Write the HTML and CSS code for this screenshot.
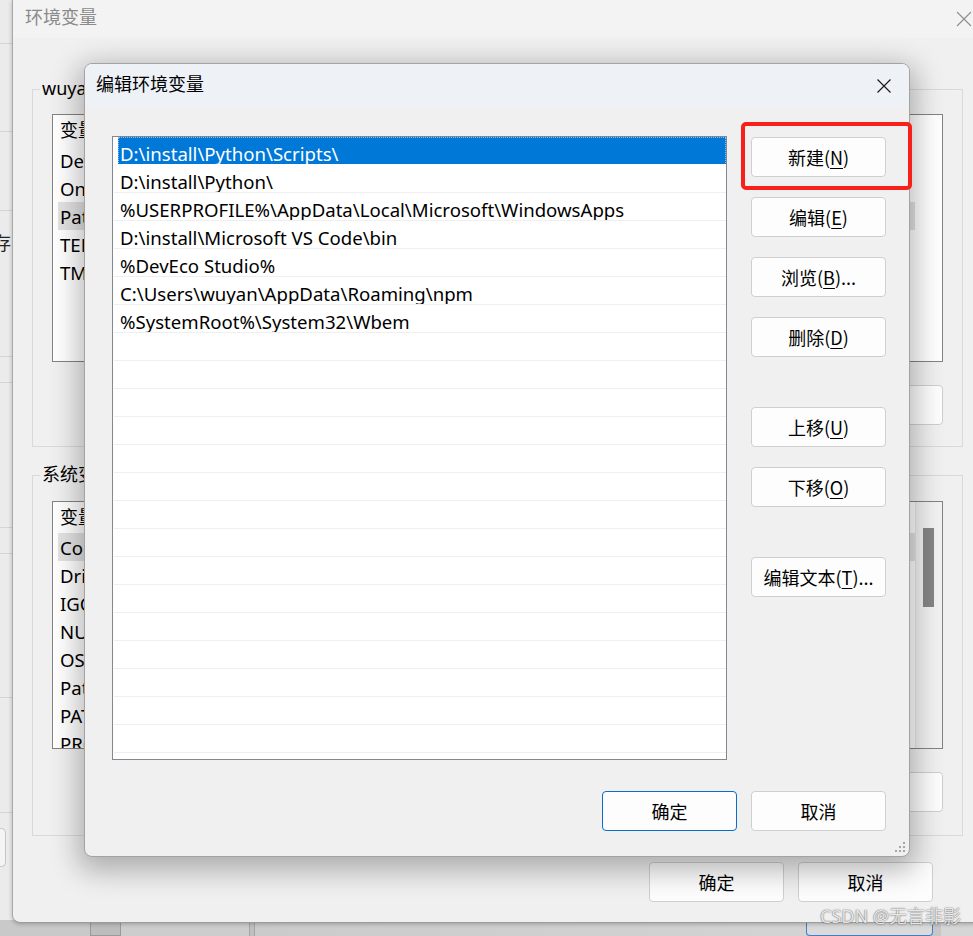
FILE: index.html
```html
<!DOCTYPE html>
<html lang="zh-CN">
<head>
<meta charset="utf-8">
<title>编辑环境变量</title>
<link rel="stylesheet" href="styles.css">
</head>
<body>
<div class="desk">
  <div class="behind-left">
    <svg class="behind-lines" width="14" height="923" viewBox="0 0 14 923">
      <g stroke="#d4d4d4" stroke-width="1">
        <line x1="0" y1="43.5" x2="14" y2="43.5"/>
        <line x1="0" y1="131.5" x2="14" y2="131.5"/>
        <line x1="0" y1="210.5" x2="14" y2="210.5"/>
        <line x1="0" y1="356.5" x2="14" y2="356.5"/>
        <line x1="0" y1="382.5" x2="14" y2="382.5"/>
        <line x1="0" y1="527.5" x2="14" y2="527.5"/>
        <line x1="0" y1="553.5" x2="14" y2="553.5"/>
        <line x1="0" y1="697.5" x2="14" y2="697.5"/>
        <line x1="0" y1="812.5" x2="14" y2="812.5"/>
      </g>
      <rect x="-10.5" y="828.5" width="16" height="38" rx="4" fill="#f4f4f4" stroke="#c4c4c4"/>
    </svg>
    <span class="behind-char">存</span>
  </div>

  <div class="behind-bottom">
    <div class="bb-seg bb-a"></div>
    <div class="bb-seg bb-b"></div>
    <div class="bb-seg bb-c"></div>
    <div class="bb-seg bb-d"></div>
    <div class="bb-seg bb-e"></div>
    <div class="bb-seg bb-btn"></div>
    <div class="bb-seg bb-f"></div>
  </div>

  <section class="env-win">
    <header class="env-title">
      <span class="env-title-text">环境变量</span>
      <span class="env-close">
        <svg width="16" height="16" viewBox="0 0 16 16"><path d="M1 1 L15 15 M15 1 L1 15" stroke="#8e8e8e" stroke-width="1.1" fill="none"/></svg>
      </span>
    </header>
    <div class="env-body">
      <div class="group user">
        <span class="group-label">wuyan 的用户变量(<u>U</u>)</span>
        <div class="bg-list">
          <div class="bg-main">
            <div class="bg-head"><span class="bg-col">变量</span><span>值</span></div>
            <div class="bg-row">DevEco Studio</div>
            <div class="bg-row">OneDrive</div>
            <div class="bg-row sel">Path</div>
            <div class="bg-row">TEMP</div>
            <div class="bg-row">TMP</div>
          </div>
        </div>
        <div class="bg-btns">
          <button class="btn">新建(<u>N</u>)...</button>
          <button class="btn">编辑(<u>E</u>)...</button>
          <button class="btn">删除(<u>D</u>)</button>
        </div>
      </div>

      <div class="group sys">
        <span class="group-label">系统变量(<u>S</u>)</span>
        <div class="bg-list">
          <div class="bg-main">
            <div class="bg-head"><span class="bg-col">变量</span><span>值</span></div>
            <div class="bg-row sel">ComSpec</div>
            <div class="bg-row">DriverData</div>
            <div class="bg-row">IGCCSVC_DB</div>
            <div class="bg-row">NUMBER_OF_PROCESSORS</div>
            <div class="bg-row">OS</div>
            <div class="bg-row">Path</div>
            <div class="bg-row">PATHEXT</div>
            <div class="bg-row">PROCESSOR_ARCHITECTURE</div>
          </div>
          <div class="bg-scroll"><div class="bg-thumb"></div></div>
        </div>
        <div class="bg-btns">
          <button class="btn">新建(<u>W</u>)...</button>
          <button class="btn">编辑(<u>I</u>)...</button>
          <button class="btn">删除(<u>L</u>)</button>
        </div>
      </div>

      <div class="env-actions">
        <button class="btn">确定</button>
        <button class="btn">取消</button>
      </div>
    </div>
  </section>

  <section class="edit-dlg">
    <header class="dlg-title">
      <span class="dlg-title-text">编辑环境变量</span>
      <span class="dlg-close">
        <svg width="16" height="16" viewBox="0 0 16 16"><path d="M1.5 1.5 L14.5 14.5 M14.5 1.5 L1.5 14.5" stroke="#1a1a1a" stroke-width="1.2" fill="none"/></svg>
      </span>
    </header>
    <div class="dlg-body">
      <div class="dlg-main">
        <div class="path-list">
          <div class="path-row sel"><span class="sel-box">D:\install\Python\Scripts\</span></div>
          <div class="path-row">D:\install\Python\</div>
          <div class="path-row">%USERPROFILE%\AppData\Local\Microsoft\WindowsApps</div>
          <div class="path-row">D:\install\Microsoft VS Code\bin</div>
          <div class="path-row">%DevEco Studio%</div>
          <div class="path-row">C:\Users\wuyan\AppData\Roaming\npm</div>
          <div class="path-row">%SystemRoot%\System32\Wbem</div>
          <div class="path-row"></div>
          <div class="path-row"></div>
          <div class="path-row"></div>
          <div class="path-row"></div>
          <div class="path-row"></div>
          <div class="path-row"></div>
          <div class="path-row"></div>
          <div class="path-row"></div>
          <div class="path-row"></div>
          <div class="path-row"></div>
          <div class="path-row"></div>
          <div class="path-row"></div>
          <div class="path-row"></div>
          <div class="path-row"></div>
          <div class="path-row"></div>
          <div class="path-row"></div>
        </div>
        <div class="side-btns">
          <div class="btn-group">
            <button class="btn">新建(<u>N</u>)</button>
            <button class="btn">编辑(<u>E</u>)</button>
            <button class="btn">浏览(<u>B</u>)...</button>
            <button class="btn">删除(<u>D</u>)</button>
          </div>
          <div class="btn-group">
            <button class="btn">上移(<u>U</u>)</button>
            <button class="btn">下移(<u>O</u>)</button>
          </div>
          <div class="btn-group">
            <button class="btn">编辑文本(<u>T</u>)...</button>
          </div>
        </div>
      </div>
      <div class="dlg-actions">
        <button class="btn default">确定</button>
        <button class="btn">取消</button>
      </div>
    </div>
    <svg class="grip" width="12" height="12" viewBox="0 0 12 12">
      <g fill="#a6a6a6">
        <rect x="9" y="1" width="2" height="2"/>
        <rect x="5" y="5" width="2" height="2"/>
        <rect x="9" y="5" width="2" height="2"/>
        <rect x="1" y="9" width="2" height="2"/>
        <rect x="5" y="9" width="2" height="2"/>
        <rect x="9" y="9" width="2" height="2"/>
      </g>
    </svg>
  </section>

  <div class="annot"></div>
  <div class="watermark">CSDN @无言非影</div>
</div>
</body>
</html>
```

FILE: styles.css
```css
* { box-sizing: border-box; }
html, body { margin: 0; padding: 0; }
body {
  width: 973px;
  height: 936px;
  overflow: hidden;
  background: #e6e6e6;
  font-family: "Noto Sans", "Noto Sans CJK SC", sans-serif;
  font-size: 18px;
  color: #000;
}
u { text-decoration: underline; text-decoration-thickness: 1px; text-underline-offset: 3px; }

.desk { position: relative; width: 973px; height: 936px; overflow: hidden; }

/* window peeking out on the left */
.behind-left {
  position: absolute; left: 0; top: 0;
  width: 14px; height: 923px;
  background: #ebebeb;
  overflow: hidden;
}
.behind-lines { display: block; }
.behind-char {
  position: absolute; left: -7px; top: 230px;
  font-family: "Noto Sans CJK SC", sans-serif;
  font-size: 18px; line-height: 24px; color: #222;
}

/* strip below the main window */
.behind-bottom {
  position: absolute; left: 0; top: 920px;
  width: 973px; height: 16px;
  display: flex;
  background: #c6c6c6;
}
.bb-seg { height: 16px; }
.bb-a { width: 90px; background: #c9c9c9; }
.bb-b { width: 31px; background: #bdbdbd; border: 1px solid #9a9a9a; border-top: 0; }
.bb-c { width: 128px; background: #cdcdcd; }
.bb-d { width: 6px; border-left: 1px solid #a5a5a5; border-right: 1px solid #a5a5a5; background: #c0c0c0; }
.bb-e { width: 551px; background: linear-gradient(to right, #cbcbcb, #d3d3d3); }
.bb-btn { width: 127px; background: #dadada; border: 1px solid #3d7fd0; border-top: 0; border-radius: 0 0 4px 4px; }
.bb-f { flex: 1; background: #d6d6d6; margin-left: 8px; }

/* background window: 环境变量 */
.env-win {
  position: absolute; left: 12px; top: 0;
  width: 980px; height: 923px;
  background: #f0f0f0;
  border-left: 1px solid #a9a9a9;
  border-bottom: 1px solid #9c9c9c;
  border-bottom-left-radius: 8px;
  box-shadow: 0 1px 4px rgba(0,0,0,.25);
  display: flex; flex-direction: column;
  overflow: hidden;
}
.env-title {
  height: 38px; flex: none;
  background: #f3f3f3;
  display: flex; align-items: center; justify-content: space-between;
  padding-left: 12px;
}
.env-title-text {
  color: #8a8a8a; font-size: 18px;
  font-family: "Noto Sans CJK SC", sans-serif;
  line-height: 24px;
  margin-bottom: 6px;
}
.env-close {
  width: 46px; height: 38px; margin-right: 5px;
  display: flex; align-items: center; justify-content: center;
}
.env-body { padding: 51px 0 0 19px; display: flex; flex-direction: column; }

.group {
  position: relative;
  width: 931px;
  border: 1px solid #d9d9d9;
  padding: 24px 19px 21px 19px;
}
.group.sys { margin-top: 28px; padding: 25px 19px 23px 19px; }
.group-label {
  position: absolute; left: 7px; top: -14px;
  padding: 0 2px;
  background: #f0f0f0;
  line-height: 24px;
  font-size: 18px;
  white-space: nowrap;
}
.bg-list {
  height: 248px;
  border: 1px solid #838383;
  background: #fff;
  display: flex;
  overflow: hidden;
}
.bg-main { flex: 1; overflow: hidden; }
.bg-head {
  height: 31px; line-height: 31px;
  padding-left: 7px;
  display: flex;
  white-space: nowrap;
}
.bg-col { width: 300px; }
.bg-row {
  height: 28px; line-height: 30px;
  margin-left: 5px; width: 857px;
  padding-left: 2px;
  font-size: 18.6px;
  white-space: nowrap;
  overflow: hidden;
}
.bg-row.sel { background: #e3e3e3; }
.bg-scroll {
  width: 27px; flex: none;
  background: #f2f2f2;
  border-left: 1px solid #e6e6e6;
  padding: 26px 0 0 7px;
}
.bg-thumb { width: 11px; height: 79px; background: #858585; }

.bg-btns {
  margin-top: 23px;
  display: flex; justify-content: flex-end; gap: 13px;
}
.env-actions {
  width: 931px;
  margin-top: 26px;
  padding-right: 30px;
  display: flex; justify-content: flex-end; gap: 14px;
}

/* buttons */
.btn {
  width: 135px; height: 40px;
  border: 1px solid #cfcfcf;
  border-radius: 4px;
  background: #fdfdfd;
  font-family: "Noto Sans CJK SC", sans-serif;
  font-size: 18px;
  color: #000;
  padding: 0;
  line-height: 38px;
  text-align: center;
}
.btn.default { border-color: #0a6ccb; }

/* front dialog: 编辑环境变量 */
.edit-dlg {
  position: absolute; left: 84px; top: 63px;
  width: 826px; height: 794px;
  background: #f0f0f0;
  border: 1px solid #a3a3a3;
  border-radius: 8px;
  box-shadow: 0 8px 28px 6px rgba(0,0,0,.28);
  display: flex; flex-direction: column;
  overflow: hidden;
}
.dlg-title {
  height: 43px; flex: none;
  background: #eef2f7;
  display: flex; align-items: center; justify-content: space-between;
  padding-left: 11px;
}
.dlg-title-text {
  font-family: "Noto Sans CJK SC", sans-serif; font-size: 18px;
  line-height: 24px;
  margin-bottom: 6px;
}
.dlg-close {
  width: 46px; height: 43px; margin-right: 2px;
  display: flex; align-items: center; justify-content: center;
}
.dlg-body { padding: 29px 23px 0 27px; display: flex; flex-direction: column; }
.dlg-main { display: flex; gap: 24px; }

.path-list {
  width: 615px; height: 624px;
  border: 1px solid #838790;
  background: #fff;
  overflow: hidden;
  flex: none;
}
.path-row {
  height: 28px; line-height: 33px;
  margin-left: 1px;
  padding-left: 6px;
  border-bottom: 1px solid #efefef;
  font-size: 18.6px;
  white-space: nowrap;
  overflow: hidden;
}
.path-row.sel { padding-left: 0; border-bottom-color: transparent; }
.sel-box {
  display: block;
  margin-left: 4px;
  height: 28px;
  padding-left: 2px;
  background: #0078d7;
  color: #fff;
  outline: 1px dotted #8fc1ee;
  outline-offset: -1px;
}

.side-btns {
  width: 135px;
  padding-top: 1px;
  display: flex; flex-direction: column; gap: 50px;
}
.btn-group { display: flex; flex-direction: column; gap: 20px; }

.dlg-actions {
  margin-top: 31px;
  display: flex; justify-content: flex-end; gap: 14px;
}

.grip { position: absolute; right: 3px; bottom: 3px; }

/* annotation & watermark overlays */
.annot {
  position: absolute; left: 741px; top: 122px;
  width: 171px; height: 68px;
  border: 4px solid #f8201a;
  border-radius: 5px;
}
.watermark {
  position: absolute; left: 820px; top: 903px;
  font-family: "Noto Sans", "Noto Sans CJK SC", sans-serif;
  font-size: 18px; line-height: 26px;
  color: rgba(250,250,250,.9);
  text-shadow: 0 0 1px rgba(0,0,0,.6), 0 0 2px rgba(0,0,0,.35);
  white-space: nowrap;
}
```
